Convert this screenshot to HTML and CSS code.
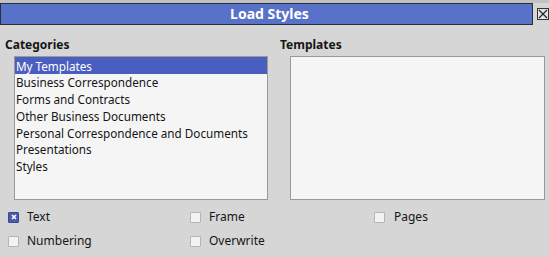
FILE: index.html
```html
<!DOCTYPE html>
<html>
<head>
<meta charset="utf-8">
<link rel="stylesheet" href="styles.css">
</head>
<body>
<div class="dialog">
  <div class="topstrip"></div>
  <div class="titlerow">
    <div class="titlebar">Load Styles</div>
    <div class="close"><svg width="10" height="10" viewBox="0 0 10 10"><path d="M1 1L9 9M9 1L1 9" stroke="#222" stroke-width="1.2" fill="none"/></svg></div>
  </div>
  <div class="panes">
    <div class="pane left">
      <div class="label">Categories</div>
      <div class="listbox">
        <div class="item selected">My Templates</div>
        <div class="item">Business Correspondence</div>
        <div class="item">Forms and Contracts</div>
        <div class="item">Other Business Documents</div>
        <div class="item">Personal Correspondence and Documents</div>
        <div class="item">Presentations</div>
        <div class="item">Styles</div>
      </div>
    </div>
    <div class="pane right">
      <div class="label">Templates</div>
      <div class="listbox empty"></div>
    </div>
  </div>
  <div class="options">
    <label class="opt"><span class="cb checked"><svg width="6" height="6" viewBox="0 0 6 6"><path d="M1 1L5 5M5 1L1 5" stroke="#fff" stroke-width="1.6" fill="none"/></svg></span>Text</label>
    <label class="opt"><span class="cb"></span>Frame</label>
    <label class="opt"><span class="cb"></span>Pages</label>
    <label class="opt"><span class="cb"></span>Numbering</label>
    <label class="opt"><span class="cb"></span>Overwrite</label>
  </div>
</div>
</body>
</html>
```

FILE: styles.css
```css
html, body {
  margin: 0;
  padding: 0;
}
body {
  width: 549px;
  height: 257px;
  overflow: hidden;
  background: #d6d6d6;
  font-family: "Noto Sans", "Open Sans", sans-serif;
  color: #151515;
}
.dialog {
  display: flex;
  flex-direction: column;
}
.topstrip {
  height: 3px;
  background: #c2c2c2;
}
.titlerow {
  display: flex;
  align-items: flex-start;
}
.titlebar {
  box-sizing: border-box;
  width: 533px;
  height: 22px;
  border: 1px solid #2b2d3a;
  background: #5871c9;
  color: #fff;
  font-weight: bold;
  font-size: 14px;
  line-height: 20px;
  text-align: center;
  padding-left: 6px;
}
.close {
  box-sizing: border-box;
  width: 12px;
  height: 12px;
  margin-left: 4px;
  margin-top: 5px;
  border: 1px solid #333;
  background: #e4e4e4;
  display: flex;
  align-items: center;
  justify-content: center;
}
.panes {
  display: flex;
  padding: 12px 0 0 5px;
}
.pane {
  display: flex;
  flex-direction: column;
}
.pane.left {
  width: 275px;
}
.label {
  font-weight: bold;
  font-size: 12px;
  line-height: 16px;
  height: 19px;
}
.listbox {
  box-sizing: border-box;
  border: 1px solid #9a9a9a;
  background: #f5f5f5;
  height: 144px;
}
.left .listbox {
  margin-left: 9px;
  width: 254px;
}
.right .listbox {
  margin-left: 10px;
  width: 255px;
}
.item {
  font-size: 11.7px;
  line-height: 16.8px;
  padding-left: 1px;
  padding-top: 0.5px;
  height: 16.3px;
  white-space: nowrap;
}
.item.selected {
  background: #4a5ec0;
  color: #fff;
}
.options {
  display: grid;
  grid-template-columns: 182px 184px 100px;
  row-gap: 8px;
  padding: 9px 0 0 8px;
}
.opt {
  display: flex;
  align-items: center;
  font-size: 12px;
  line-height: 16px;
  gap: 8px;
}
.opt:nth-child(3) {
  gap: 9px;
}
.cb {
  box-sizing: border-box;
  width: 11px;
  height: 11px;
  border: 1px solid #b4b4b4;
  background: #f3f3f3;
  border-radius: 1px;
  display: flex;
  align-items: center;
  justify-content: center;
}
.cb.checked {
  background: #4a5ab0;
  border-color: #3a4890;
}
```
